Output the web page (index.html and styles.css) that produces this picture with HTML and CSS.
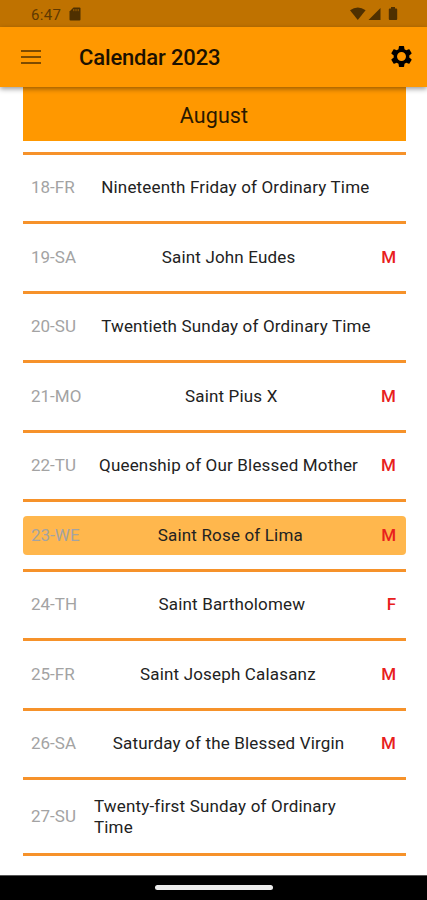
FILE: index.html
```
<!DOCTYPE html>
<html lang="en">
<head>
<meta charset="utf-8">
<title>Calendar 2023</title>
<link rel="stylesheet" href="styles.css">
</head>
<body>
<div class="status">
  <span class="clock">6:47</span>
  <svg class="sd" width="12" height="14" viewBox="0 0 12 14"><path d="M4.5 0.5H10.5Q11.5 0.5 11.5 1.5V12.5Q11.5 13.5 10.5 13.5H1.5Q0.5 13.5 0.5 12.5V4.5Z"/><path class="slots" d="M4.8 2v2.2M7 2v2.2M9.2 2v2.2"/></svg>
  <svg class="signals" width="48" height="14" viewBox="0 0 48 14"><path d="M0 3.2Q7.8-2.2 15.6 3.2L7.8 13Z"/><path d="M18.500 13L30.500 1V13Z"/><path d="M41 0h4v1.500h1.200q1 0 1 1V12q0 1-1 1h-6.400q-1 0-1-1V2.500q0-1 1-1H41Z"/></svg>
</div>
<header class="appbar">
  <svg class="menu" width="20" height="14" viewBox="0 0 20 14"><path d="M0 1h20M0 7h20M0 13h20"/></svg>
  <h1>Calendar 2023</h1>
  <svg class="gear" width="25" height="25" viewBox="0 0 24 24"><path fill-rule="evenodd" d="M19.430 12.980c.04-.32.07-.64.07-.98s-.03-.66-.07-.98l2.110-1.650c.19-.15.24-.42.12-.64l-2-3.460c-.12-.22-.39-.3-.61-.22l-2.490 1c-.52-.4-1.080-.73-1.690-.98l-.38-2.650C14.460 2.180 14.250 2 14 2h-4c-.25 0-.46.18-.49.42l-.38 2.650c-.61.25-1.170.59-1.690.98l-2.490-1c-.23-.09-.49 0-.61.22l-2 3.460c-.13.22-.07.49.12.64l2.110 1.650c-.04.32-.07.65-.07.98s.03.66.07.98l-2.110 1.650c-.19.15-.24.42-.12.64l2 3.460c.12.22.39.3.61.22l2.490-1c.52.4 1.080.73 1.690.98l.38 2.650c.03.24.24.42.49.42h4c.25 0 .46-.18.49-.42l.38-2.650c.61-.25 1.170-.59 1.690-.98l2.490 1c.23.09.49 0 .61-.22l2-3.460c.12-.22.07-.49-.12-.64l-2.110-1.650zM12 16.300a4.300 4.300 0 1 1 0-8.600 4.300 4.300 0 0 1 0 8.600z"/></svg>
</header>
<main>
  <h2>August</h2>
  <ul>
    <li><div class="day"><span class="date">18-FR</span><span class="name">Nineteenth Friday of Ordinary Time</span><b></b></div></li>
    <li><div class="day"><span class="date">19-SA</span><span class="name">Saint John Eudes</span><b>M</b></div></li>
    <li><div class="day"><span class="date">20-SU</span><span class="name">Twentieth Sunday of Ordinary Time</span><b></b></div></li>
    <li><div class="day"><span class="date">21-MO</span><span class="name">Saint Pius X</span><b>M</b></div></li>
    <li><div class="day"><span class="date">22-TU</span><span class="name">Queenship of Our Blessed Mother</span><b>M</b></div></li>
    <li><div class="day today"><span class="date">23-WE</span><span class="name">Saint Rose of Lima</span><b>M</b></div></li>
    <li><div class="day"><span class="date">24-TH</span><span class="name">Saint Bartholomew</span><b>F</b></div></li>
    <li><div class="day"><span class="date">25-FR</span><span class="name">Saint Joseph Calasanz</span><b>M</b></div></li>
    <li><div class="day"><span class="date">26-SA</span><span class="name">Saturday of the Blessed Virgin</span><b>M</b></div></li>
    <li class="tall"><div class="day"><span class="date">27-SU</span><span class="name">Twenty-first Sunday of Ordinary Time</span><b></b></div></li>
  </ul>
</main>
<footer><div class="handle"></div></footer>
</body>
</html>
```
FILE: styles.css
```
* { box-sizing: border-box; }
body {
  margin: 0;
  height: 900px;
  display: flex;
  flex-direction: column;
  overflow: hidden;
  background: #fff;
  font-family: Roboto, sans-serif;
}
.status {
  height: 26.500px;
  flex: none;
  display: flex;
  align-items: center;
  padding: 2px 29px 0 31px;
  background: #bf7200;
  color: #5f3900;
}
.clock { font-size: 15px; letter-spacing: 0.3px; width: 38px; padding-top: 1px; }
.sd, .signals { fill: #4f3000; }
.slots { stroke: #a36100; stroke-width: 1; fill: none; }
.signals { margin-left: auto; }
.appbar {
  height: 60.500px;
  flex: none;
  display: flex;
  align-items: center;
  padding: 0 13px 0 21px;
  background: #ff9800;
  box-shadow: 0 2px 5px rgba(0, 0, 0, 0.4);
  position: relative;
}
.menu { stroke: #7d4b00; stroke-width: 2; }
h1 {
  margin: 2px auto 0 38px;
  font-size: 22px;
  line-height: 28px;
  font-weight: 500;
  letter-spacing: -0.15px;
  color: #1c1100;
}
main { flex: 1; padding: 0 21.500px 0 22.500px; }
h2 {
  margin: 0 0 10.500px;
  height: 54px;
  line-height: 57px;
  text-align: center;
  font-size: 21.500px;
  font-weight: 400;
  letter-spacing: 0.1px;
  background: #ff9800;
  color: #291800;
}
ul {
  margin: 0;
  padding: 0;
  list-style: none;
  border-top: 3px solid #f6922a;
}
li {
  height: 69.500px;
  display: flex;
  align-items: center;
  border-bottom: 3px solid #f6922a;
}
li.tall { height: 76px; }
.day {
  flex: 1;
  min-height: 38.500px;
  padding: 0 9.500px 0 8.500px;
  display: flex;
  align-items: center;
  justify-content: space-between;
  border-radius: 4px;
  font-size: 17px;
  line-height: 21px;
  color: #222;
}
.today { background: #ffb74d; }
.date { color: #a3a3a3; }
.name { max-width: 284px; letter-spacing: 0.17px; }
b { font-weight: 500; color: #e8201c; }
footer {
  height: 25px;
  flex: none;
  display: flex;
  justify-content: center;
  align-items: center;
  background: #000;
  border-top: 1px solid #555;
}
.handle { width: 118px; height: 5px; margin-bottom: 2px; border-radius: 2.500px; background: #ececec; }
```
